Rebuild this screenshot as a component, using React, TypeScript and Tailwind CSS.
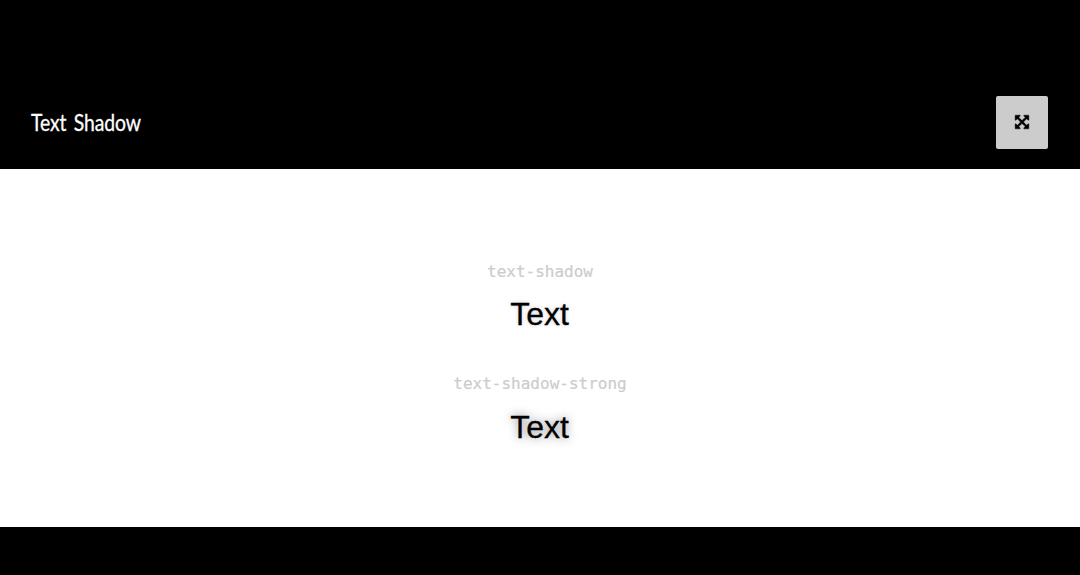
const samples = [
  { name: "text-shadow", style: "mt-1.5 [text-shadow:0_0_4px_rgba(0,0,0,0.2)]" },
  { name: "text-shadow-strong", style: "mt-[7px] [text-shadow:0_0_10px_rgba(0,0,0,0.5)]" },
];

function ArrowsIcon() {
  return (
    <svg viewBox="0 0 1792 1792" className="mb-px mr-px size-4 fill-black stroke-black" strokeWidth="50" aria-hidden="true">
      <path d="M1411 541l-355 355 355 355 144-144q29-31 70-14 39 17 39 59v448q0 26-19 45t-45 19h-448q-42 0-59-40-17-39 14-69l144-144-355-355-355 355 144 144q31 30 14 69-17 40-59 40h-448q-26 0-45-19t-19-45v-448q0-42 40-59 39-17 69 14l144 144 355-355-355-355-144 144q-19 19-45 19-12 0-24-5-40-17-40-59v-448q0-26 19-45t45-19h448q42 0 59 40 17 39-14 69l-144 144 355 355 355-355-144-144q-31-30-14-69 17-40 59-40h448q26 0 45 19t19 45v448q0 42-39 59-13 5-25 5-26 0-45-19z" />
    </svg>
  );
}

export default function App() {
  return (
    <div className="flex h-[575px] w-full flex-col bg-black pt-24 font-['Liberation_Sans',sans-serif]">
      <header className="flex h-[53px] shrink-0 items-center justify-between pl-[31px] pr-8">
        <h1 className="origin-left scale-x-[0.86] whitespace-nowrap font-['Lato',sans-serif] text-[22.5px] leading-8 tracking-[-0.1px] text-white [word-spacing:3px] [-webkit-text-stroke:0.3px_white]">
          Text Shadow
        </h1>
        <button aria-label="Expand" className="flex h-[53px] w-[52px] items-center justify-center rounded-xs bg-[#cccccc]">
          <ArrowsIcon />
        </button>
      </header>
      <main className="mt-5 flex h-[358px] flex-col items-center bg-white pt-[91px]">
        {samples.map((s) => (
          <section key={s.name} className="flex h-[112px] flex-col items-center">
            <code className="font-['DejaVu_Sans_Mono',monospace] text-[16px] leading-6 text-[#cccccc] [-webkit-text-stroke:0.2px_#cccccc]">{s.name}</code>
            <p className={`pr-px text-[32px] leading-[48px] text-black [-webkit-text-stroke:0.3px_black] ${s.style}`}>Text</p>
          </section>
        ))}
      </main>
    </div>
  );
}
